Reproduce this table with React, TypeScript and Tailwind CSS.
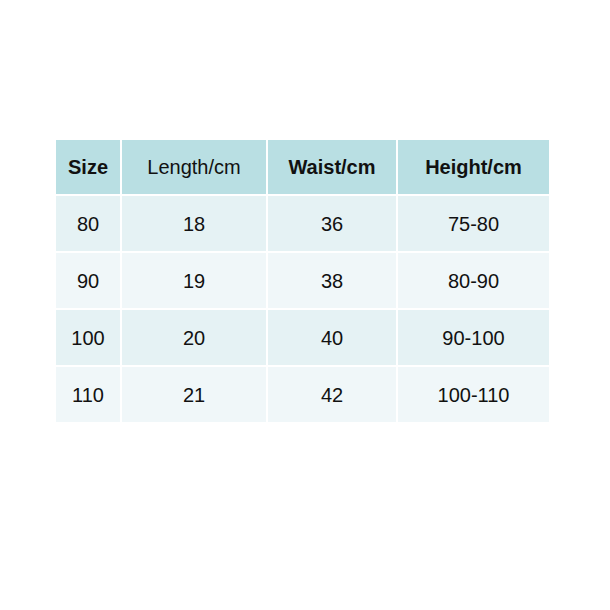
const HEADERS = ['Size', 'Length/cm', 'Waist/cm', 'Height/cm'];
const BOLD = [true, false, true, true];

const ROWS = [
  ['80', '18', '36', '75-80'],
  ['90', '19', '38', '80-90'],
  ['100', '20', '40', '90-100'],
  ['110', '21', '42', '100-110'],
];

export default function App() {
  return (
    <div className="w-[610px] h-[610px] bg-white flex pt-[140px] pl-[56px]" style={{ fontFamily: '"Liberation Sans", Arial, sans-serif' }}>
      <div className="grid grid-cols-[64px_144px_128px_151px] gap-[2px] h-fit text-[20px] text-[#111]">
        {HEADERS.map((h, i) => (
          <div key={h} className={`h-[54px] bg-[#b9dfe3] flex items-center justify-center ${BOLD[i] ? 'font-bold' : ''}`}>
            {h}
          </div>
        ))}
        {ROWS.map((row, r) =>
          row.map((cell, c) => (
            <div key={`${r}-${c}`} className={`h-[55px] flex items-center justify-center ${r % 2 === 0 ? 'bg-[#e5f2f4]' : 'bg-[#f0f7f9]'}`}>
              {cell}
            </div>
          ))
        )}
      </div>
    </div>
  );
}
